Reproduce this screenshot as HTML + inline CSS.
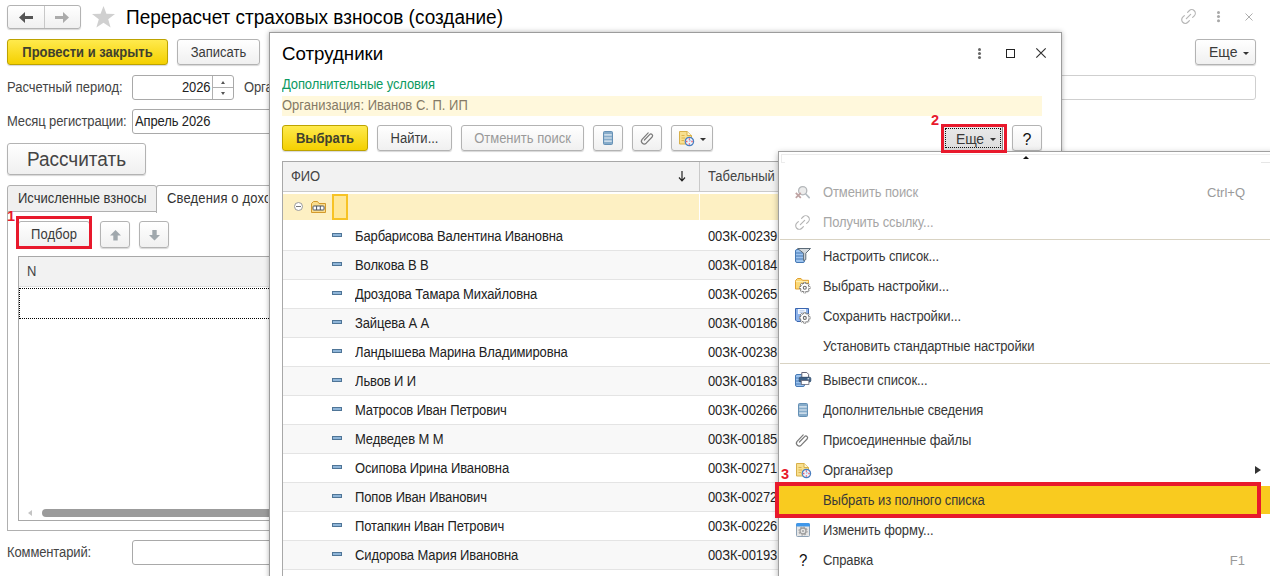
<!DOCTYPE html>
<html lang="ru">
<head>
<meta charset="utf-8">
<title>Перерасчет страховых взносов (создание)</title>
<style>
*{box-sizing:border-box;margin:0;padding:0}
html,body{width:1270px;height:576px;overflow:hidden;background:#fff}
body{font-family:"Liberation Sans",sans-serif;font-size:13px;color:#333;position:relative}
.abs{position:absolute}
.t{position:absolute;white-space:nowrap;line-height:16px;height:16px;letter-spacing:-0.12px;transform:scaleY(1.07);transform-origin:0 12.5px}
.btn{position:absolute;border:1px solid #b3b3b3;border-radius:3px;background:linear-gradient(#ffffff,#f0f0f0);box-shadow:0 1px 1px rgba(0,0,0,.16);text-align:center;white-space:nowrap;color:#3a3a3a;line-height:25px;height:26px}
.btn>span{display:inline-block;transform:scaleY(1.07);transform-origin:0 66%}
.btn.y{background:linear-gradient(#ffea4d,#f4d000);border-color:#bda300;font-weight:bold;color:#40402e}
.btn.dis{color:#9a9a9a}
.inp{position:absolute;border:1px solid #a9a9a9;border-radius:3px;background:#fff;height:25px}
.red{position:absolute;border:3px solid #e8192c;z-index:5}
.rn{position:absolute;color:#e8192c;font-weight:bold;font-size:14.5px;line-height:14px;height:14px;z-index:5}
.caret{position:absolute;width:0;height:0;border-left:4px solid transparent;border-right:4px solid transparent;border-top:4px solid #333}
#modal{position:absolute;left:269px;top:32px;width:793px;height:560px;background:#fff;border:1px solid #9c9c9c;box-shadow:0 0 5px rgba(0,0,0,.3)}
.row{position:absolute;left:283px;width:495px;height:29px;border-bottom:1px solid #e4e4e4}
.row.g{background:#f8f8f8}
.dash{position:absolute;left:332px;width:10px;height:4px;background:#8fb5d8;border:1px solid #4f7597}
#pop{position:absolute;left:778px;top:151px;width:500px;height:440px;background:#fff;border:1px solid #a0a0a0;box-shadow:0 2px 6px rgba(0,0,0,.3)}
.mi{position:absolute;left:823px;white-space:nowrap;line-height:16px;height:16px;color:#383838;letter-spacing:-0.12px;transform:scaleY(1.07);transform-origin:0 12.5px}
.mi.dis{color:#a6a6a6}
.sep{position:absolute;left:780px;width:490px;height:1px;background:#d9d3c3}
.sc{position:absolute;color:#9a9a9a;line-height:16px;height:16px;white-space:nowrap;text-align:right}
svg{position:absolute;overflow:visible}
</style>
</head>
<body>

<!-- ============ main form header ============ -->
<div class="btn" style="left:7px;top:5px;width:74px;height:24px"></div>
<div class="abs" style="left:44px;top:6px;width:1px;height:22px;background:#c8c8c8"></div>
<svg style="left:19px;top:12px" width="14" height="11" viewBox="0 0 14 11"><path d="M0 5.5 L6 0 V3.9 H14 V7.1 H6 V11 Z" fill="#555"/></svg>
<svg style="left:55px;top:12px" width="14" height="11" viewBox="0 0 14 11"><path d="M14 5.5 L8 0 V3.9 H0 V7.1 H8 V11 Z" fill="#ababab"/></svg>
<svg style="left:91.8px;top:6.3px" width="23" height="21.6" viewBox="0 0 22 21" preserveAspectRatio="none"><path d="M11 0 L13.8 7.6 L22 7.9 L15.5 12.9 L17.8 21 L11 16.3 L4.2 21 L6.5 12.9 L0 7.9 L8.2 7.6 Z" fill="#d0d0d0"/></svg>
<div class="t" style="left:126px;top:6px;font-size:19px;letter-spacing:0;transform:scaleY(1.02);line-height:24px;height:24px;color:#000">Перерасчет страховых взносов (создание)</div>

<!-- top right icons -->
<svg style="left:1181px;top:8.7px" width="15" height="15" viewBox="0 0 15 15"><g transform="translate(7.5 7.5) rotate(-45) scale(0.76) translate(-12 -12)" fill="none" stroke="#b6b6b6" stroke-width="1.55" stroke-linecap="round"><path d="M15 7.3h3a4.7 4.7 0 0 1 4.7 4.7 4.7 4.7 0 0 1-4.7 4.7h-3m-6 0H6a4.7 4.7 0 0 1-4.7-4.7 4.7 4.7 0 0 1 4.7-4.7h3"/><path d="M8 12H16"/></g></svg>
<div class="abs" style="left:1216.7px;top:10.5px;width:3.4px;height:3.4px;border-radius:50%;background:#a8a8a8;box-shadow:0 4.1px 0 #a8a8a8,0 8.2px 0 #a8a8a8"></div>
<svg style="left:1245px;top:13px" width="8" height="8" viewBox="0 0 8 8"><path d="M0.5 0.5 L7.5 7.5 M7.5 0.5 L0.5 7.5" stroke="#adadad" stroke-width="1" fill="none"/></svg>

<!-- command bar -->
<div class="btn y" style="left:7px;top:39px;width:161px"><span>Провести и закрыть</span></div>
<div class="btn" style="left:177px;top:39px;width:83px"><span>Записать</span></div>
<div class="btn" style="left:1195px;top:39px;width:61px;text-align:left;padding-left:13px;font-size:14px"><span>Еще</span></div>
<div class="caret" style="left:1243px;top:52px;border-left-width:3px;border-right-width:3px;border-top-width:3px"></div>

<!-- fields -->
<div class="t" style="left:7px;top:80px;letter-spacing:0;color:#444">Расчетный период:</div>
<div class="inp" style="left:132px;top:75px;width:102px"></div>
<div class="t" style="left:182px;top:80px;color:#222">2026</div>
<div class="abs" style="left:212px;top:76px;width:1px;height:23px;background:#b0b0b0"></div>
<div class="abs" style="left:213px;top:87px;width:20px;height:1px;background:#b0b0b0"></div>
<div class="abs" style="left:221px;top:81px;width:0;height:0;border-left:2px solid transparent;border-right:2px solid transparent;border-bottom:3px solid #555"></div>
<div class="abs" style="left:221px;top:92px;width:0;height:0;border-left:2px solid transparent;border-right:2px solid transparent;border-top:3px solid #555"></div>
<div class="t" style="left:244px;top:80px;color:#444">Организация:</div>
<div class="inp" style="left:330px;top:75px;width:926px;border-color:#cfcfcf"></div>

<div class="t" style="left:7px;top:114px;color:#444">Месяц регистрации:</div>
<div class="inp" style="left:132px;top:109px;width:200px"></div>
<div class="t" style="left:135px;top:114px;color:#222">Апрель 2026</div>

<div class="btn" style="left:7px;top:143px;width:139px;height:32px;line-height:32px;font-size:19px;color:#444"><span style="transform:scaleY(1.02)">Рассчитать</span></div>

<!-- tabs -->
<div class="abs" style="left:7px;top:211px;width:800px;height:320px;border:1px solid #b0b0b0;background:#fff"></div>
<div class="abs" style="left:7px;top:185px;width:150px;height:27px;border:1px solid #b0b0b0;border-radius:3px 3px 0 0;background:#f0f0f0"></div>
<div class="t" style="left:18px;top:191px;letter-spacing:0;color:#333">Исчисленные взносы</div>
<div class="abs" style="left:156px;top:185px;width:200px;height:28px;border:1px solid #b0b0b0;border-bottom:none;border-radius:3px 3px 0 0;background:#fff"></div>
<div class="t" style="left:167px;top:191px;width:101px;overflow:hidden;letter-spacing:0.15px;color:#333">Сведения о доходах</div>

<!-- podbor -->
<div class="rn" style="left:7px;top:209px">1</div>
<div class="btn" style="left:18px;top:221px;width:72px;height:27px;line-height:26px"><span>Подбор</span></div>
<div class="red" style="left:16px;top:216px;width:76px;height:33px"></div>
<div class="btn" style="left:100px;top:221px;width:30px;height:27px"></div>
<div class="btn" style="left:139px;top:221px;width:30px;height:27px"></div>
<svg style="left:109.6px;top:229.6px" width="11" height="10.6" viewBox="0 0 10 10" preserveAspectRatio="none"><path d="M5 0 L10 5.3 H7 V10 H3 V5.3 H0 Z" fill="#a0a8ad"/></svg>
<svg style="left:148.6px;top:229.6px" width="11" height="10.6" viewBox="0 0 10 10" preserveAspectRatio="none"><path d="M5 10 L10 4.7 H7 V0 H3 V4.7 H0 Z" fill="#a0a8ad"/></svg>

<!-- left table -->
<div class="abs" style="left:18px;top:256px;width:780px;height:265px;border:1px solid #a8a8a8;background:#fff"></div>
<div class="abs" style="left:19px;top:257px;width:778px;height:30px;background:#f2f2f2;border-bottom:1px solid #e0e0e0"></div>
<div class="t" style="left:27px;top:264px;color:#444">N</div>
<div class="abs" style="left:19px;top:288px;width:778px;height:31px;border:1px dotted #000"></div>
<div class="abs" style="left:42px;top:509px;width:700px;height:8px;border-radius:4px;background:#9b9b9b"></div>
<div class="abs" style="left:28px;top:510px;width:0;height:0;border-top:3px solid transparent;border-bottom:3px solid transparent;border-right:4px solid #c4c4c4"></div>

<div class="t" style="left:7px;top:545px;color:#444">Комментарий:</div>
<div class="inp" style="left:132px;top:540px;width:1124px"></div>

<!-- ============ modal ============ -->
<div id="modal"></div>
<div class="t" style="left:282px;top:42px;font-size:18.7px;letter-spacing:0;transform:scaleY(1.02);line-height:24px;height:24px;color:#000">Сотрудники</div>
<div class="abs" style="left:978px;top:48px;width:3px;height:3px;border-radius:50%;background:#666;box-shadow:0 4px 0 #666,0 8px 0 #666"></div>
<div class="abs" style="left:1006px;top:49px;width:9px;height:9px;border:1.4px solid #222"></div>
<svg style="left:1036px;top:48px" width="10" height="10" viewBox="0 0 10 10"><path d="M0.3 0.3 L9.7 9.7 M9.7 0.3 L0.3 9.7" stroke="#333" stroke-width="1.2" fill="none"/></svg>

<div class="t" style="left:282px;top:77px;color:#0c9a62">Дополнительные условия</div>
<div class="abs" style="left:282px;top:96px;width:760px;height:20px;background:#fff8dc"></div>
<div class="t" style="left:282px;top:98px;letter-spacing:0;color:#857a66">Организация: Иванов С. П. ИП</div>

<div class="btn y" style="left:282px;top:125px;width:86px"><span>Выбрать</span></div>
<div class="btn" style="left:377px;top:125px;width:75px"><span>Найти...</span></div>
<div class="btn dis" style="left:461px;top:125px;width:123px"><span>Отменить поиск</span></div>
<div class="btn" style="left:593px;top:125px;width:30px"></div>
<div class="btn" style="left:632px;top:125px;width:30px"></div>
<div class="btn" style="left:671px;top:125px;width:42px"></div>
<svg style="left:603px;top:131px" width="10" height="14" viewBox="0 0 10 14"><rect x="0.5" y="0.5" width="9" height="13" rx="1" fill="#86abc9" stroke="#6590b5"/><path d="M1.2 3.9 H8.8 M1.2 7 H8.8 M1.2 10.1 H8.8" stroke="#e3edf5" stroke-width="1.1"/></svg>
<svg style="left:641px;top:131px" width="13" height="14" viewBox="0 0 13 14"><path d="M3.4 9 L8.6 3.6 a1.7 1.7 0 0 1 2.5 2.4 L5.2 12.2 a2.8 2.8 0 0 1 -4.1 -3.8 L7.2 1.9" fill="none" stroke="#7a7a7a" stroke-width="1.2" stroke-linecap="round"/></svg>
<svg style="left:679px;top:131px" width="15" height="15" viewBox="0 0 15 15"><path d="M0.5 0.5 H8 L12.5 4.5 V13 H0.5 Z" fill="#f8df8e" stroke="#d8b04a"/><path d="M8 0.5 V4.5 H12.5" fill="#fff6d0" stroke="#d8b04a"/><path d="M2.5 4.5 H5.5 M2.5 7 H6 M2.5 9.5 H5" stroke="#d8b04a" stroke-width="0.9"/><circle cx="10.4" cy="10.5" r="4.2" fill="#eef4fc" stroke="#4a7fc0" stroke-width="1.2"/><path d="M10.4 10.5 V8.3 M10.4 10.5 L12 9.4" stroke="#9dbde6" stroke-width="0.9" fill="none"/><path d="M10.4 7.4 V8.4 M10.4 12.6 V13.6 M7.3 10.5 H8.3 M12.5 10.5 H13.5" stroke="#e8192c" stroke-width="1.3"/></svg>
<div class="caret" style="left:700px;top:138px;border-left-width:3px;border-right-width:3px;border-top-width:3px"></div>

<div class="rn" style="left:931px;top:113px">2</div>
<div class="abs" style="left:944px;top:127px;width:59px;height:23px;background:linear-gradient(#e9e9e9,#dcdcdc);border-right:1px solid #8f8f8f"></div>
<div class="abs" style="left:945px;top:128px;width:56px;height:20px;border:1px dotted #111"></div>
<div class="t" style="left:956px;top:131px;font-size:14px;letter-spacing:-0.2px;color:#3a3a3a">Еще</div>
<div class="caret" style="left:990px;top:138px;border-left-width:3px;border-right-width:3px;border-top-width:3px"></div>
<div class="red" style="left:941px;top:124px;width:66px;height:29px"></div>
<div class="btn" style="left:1012px;top:125px;width:30px;font-size:16px;line-height:27px;color:#111"><span>?</span></div>

<!-- modal table -->
<div class="abs" style="left:282px;top:161px;width:760px;height:430px;border:1px solid #a8a8a8;background:#fff"></div>
<div class="abs" style="left:283px;top:162px;width:758px;height:30px;background:#f2f2f2;border-bottom:1px solid #cacaca"></div>
<div class="abs" style="left:699px;top:162px;width:1px;height:30px;background:#c9c9c9"></div>
<div class="t" style="left:291px;top:169px;color:#444">ФИО</div>
<div class="t" style="left:708px;top:169px;letter-spacing:0;color:#444">Табельный номер</div>
<svg style="left:678px;top:171px" width="8" height="11" viewBox="0 0 8 11"><path d="M4 0 V9.5 M1 6.5 L4 9.8 L7 6.5" fill="none" stroke="#222" stroke-width="1.2"/></svg>

<div class="abs" style="left:283px;top:194px;width:758px;height:26px;background:#fdf0c3"></div>
<div class="abs" style="left:699px;top:193px;width:1px;height:29px;background:#fff"></div>
<div class="abs" style="left:294px;top:202px;width:9px;height:9px;border:1px solid #9a9a9a;border-radius:50%;background:#fff"></div>
<div class="abs" style="left:296px;top:206px;width:5px;height:1px;background:#777"></div>
<svg style="left:311px;top:201px" width="15" height="12" viewBox="0 0 15 12"><path d="M0.5 11.5 V2.5 L2.5 0.5 H6.5 L8 2.5 H14.5 V11.5 Z" fill="#f9dc8c" stroke="#d39a2c"/><rect x="2" y="5" width="11" height="4" rx="0.8" fill="#fff" stroke="#4d5560" stroke-width="1"/><path d="M5.6 5 V9 M9.3 5 V9" stroke="#4d5560" stroke-width="1"/></svg>
<div class="abs" style="left:332px;top:194px;width:16px;height:26px;background:#ffe89a;border:2px solid #f7c325"></div>
<!-- rows -->
<div class="row" style="top:222px"></div>
<div class="dash" style="top:233px"></div>
<div class="t" style="left:355px;top:229px;color:#222">Барбарисова Валентина Ивановна</div>
<div class="t" style="left:708px;top:229px;color:#222">00ЗК-00239</div>
<div class="row g" style="top:251px"></div>
<div class="dash" style="top:262px"></div>
<div class="t" style="left:355px;top:258px;color:#222">Волкова В В</div>
<div class="t" style="left:708px;top:258px;color:#222">00ЗК-00184</div>
<div class="row" style="top:280px"></div>
<div class="dash" style="top:291px"></div>
<div class="t" style="left:355px;top:287px;color:#222">Дроздова Тамара Михайловна</div>
<div class="t" style="left:708px;top:287px;color:#222">00ЗК-00265</div>
<div class="row g" style="top:309px"></div>
<div class="dash" style="top:320px"></div>
<div class="t" style="left:355px;top:316px;color:#222">Зайцева А А</div>
<div class="t" style="left:708px;top:316px;color:#222">00ЗК-00186</div>
<div class="row" style="top:338px"></div>
<div class="dash" style="top:349px"></div>
<div class="t" style="left:355px;top:345px;color:#222">Ландышева Марина Владимировна</div>
<div class="t" style="left:708px;top:345px;color:#222">00ЗК-00238</div>
<div class="row g" style="top:367px"></div>
<div class="dash" style="top:378px"></div>
<div class="t" style="left:355px;top:374px;color:#222">Львов И И</div>
<div class="t" style="left:708px;top:374px;color:#222">00ЗК-00183</div>
<div class="row" style="top:396px"></div>
<div class="dash" style="top:407px"></div>
<div class="t" style="left:355px;top:403px;color:#222">Матросов Иван Петрович</div>
<div class="t" style="left:708px;top:403px;color:#222">00ЗК-00266</div>
<div class="row g" style="top:425px"></div>
<div class="dash" style="top:436px"></div>
<div class="t" style="left:355px;top:432px;color:#222">Медведев М М</div>
<div class="t" style="left:708px;top:432px;color:#222">00ЗК-00185</div>
<div class="row" style="top:454px"></div>
<div class="dash" style="top:465px"></div>
<div class="t" style="left:355px;top:461px;color:#222">Осипова Ирина Ивановна</div>
<div class="t" style="left:708px;top:461px;color:#222">00ЗК-00271</div>
<div class="row g" style="top:483px"></div>
<div class="dash" style="top:494px"></div>
<div class="t" style="left:355px;top:490px;color:#222">Попов Иван Иванович</div>
<div class="t" style="left:708px;top:490px;color:#222">00ЗК-00272</div>
<div class="row" style="top:512px"></div>
<div class="dash" style="top:523px"></div>
<div class="t" style="left:355px;top:519px;color:#222">Потапкин Иван Петрович</div>
<div class="t" style="left:708px;top:519px;color:#222">00ЗК-00226</div>
<div class="row g" style="top:541px"></div>
<div class="dash" style="top:552px"></div>
<div class="t" style="left:355px;top:548px;color:#222">Сидорова Мария Ивановна</div>
<div class="t" style="left:708px;top:548px;color:#222">00ЗК-00193</div>
<div class="row" style="top:570px"></div>

<!-- ============ popup menu ============ -->
<div id="pop"></div>
<div class="abs" style="left:781px;top:154px;width:489px;height:9px;border-left:1px solid #ececec;border-top:1px solid #ececec"></div>
<div class="abs" style="left:781px;top:162px;width:4px;height:1px;background:#ececec"></div>
<div class="abs" style="left:1261px;top:162px;width:9px;height:1px;background:#e6e6e6"></div>
<div class="abs" style="left:1023px;top:156px;width:0;height:0;border-left:3px solid transparent;border-right:3px solid transparent;border-bottom:3px solid #111"></div>

<div class="abs" style="left:779px;top:486px;width:491px;height:28px;background:#f9cb1f"></div>
<div class="mi dis" style="top:185px">Отменить поиск</div>
<div class="mi dis" style="top:215px">Получить ссылку...</div>
<div class="mi" style="top:249px">Настроить список...</div>
<div class="mi" style="top:279px">Выбрать настройки...</div>
<div class="mi" style="top:309px">Сохранить настройки...</div>
<div class="mi" style="top:339px">Установить стандартные настройки</div>
<div class="mi" style="top:373px">Вывести список...</div>
<div class="mi" style="top:403px">Дополнительные сведения</div>
<div class="mi" style="top:433px">Присоединенные файлы</div>
<div class="mi" style="top:463px">Органайзер</div>
<div class="mi" style="top:493px">Выбрать из полного списка</div>
<div class="mi" style="top:523px">Изменить форму...</div>
<div class="mi" style="top:553px">Справка</div>
<div class="sep" style="top:239px"></div>
<div class="sep" style="top:363px"></div>
<div class="sc" style="left:1180px;width:65px;top:185px">Ctrl+Q</div>
<div class="sc" style="left:1180px;width:65px;top:553px">F1</div>
<div class="abs" style="left:1255px;top:466px;width:0;height:0;border-top:4.5px solid transparent;border-bottom:4.5px solid transparent;border-left:6px solid #333"></div>
<div class="red" style="left:775px;top:482px;width:486px;height:36px;border-width:4px"></div>
<div class="rn" style="left:781px;top:467px">3</div>
<svg style="left:795px;top:186px" width="15" height="13" viewBox="0 0 15 13"><circle cx="7.7" cy="4.7" r="4.1" fill="#ececec" stroke="#b4b7ba" stroke-width="1.3"/><path d="M10.6 7.8 L14.2 11.6" stroke="#b4bcc2" stroke-width="1.6" stroke-linecap="round"/><path d="M0.8 6.8 L5.8 11.8 M5.8 6.8 L0.8 11.8" stroke="#bfa3a3" stroke-width="1.7"/></svg>
<svg style="left:795px;top:214.8px" width="15" height="15" viewBox="0 0 15 15"><g transform="translate(7.5 7.5) rotate(-45) scale(0.76) translate(-12 -12)" fill="none" stroke="#b4b4b4" stroke-width="1.5" stroke-linecap="round"><path d="M15 7.3h3a4.7 4.7 0 0 1 4.7 4.7 4.7 4.7 0 0 1-4.7 4.7h-3m-6 0H6a4.7 4.7 0 0 1-4.7-4.7 4.7 4.7 0 0 1 4.7-4.7h3"/><path d="M8 12H16"/></g></svg>
<svg style="left:795px;top:248px" width="16" height="15" viewBox="0 0 16 15"><rect x="0.5" y="1.5" width="9" height="13" rx="1.5" fill="#9cc3ee" stroke="#4679b4"/><path d="M1 5 H9 M1 8 H9 M1 11 H9" stroke="#4679b4" stroke-width="1"/><path d="M2.6 0.5 H15.5 L10.8 5.2 V11.6 L8.6 12.6 V5.2 Z" fill="#d5dade" stroke="#5c6b78" stroke-width="1" stroke-linejoin="round"/></svg>
<svg style="left:795px;top:278px" width="16" height="16" viewBox="0 0 16 16"><path d="M0.5 11 V2.5 L2.5 0.5 H6 L7.5 2.3 H13.5 V11 Z" fill="#fbd978" stroke="#e0a030"/><path d="M0.8 3.6 H13.2" stroke="#fff0b8" stroke-width="1"/><g transform="translate(9.8 9.7)"><g fill="#fff" stroke="#6b6b6b" stroke-width="1"><circle r="4.3"/></g><g stroke="#6b6b6b" stroke-width="2.6" stroke-linecap="butt"><path d="M0 -5.6 V-3.8 M0 5.6 V3.8 M-5.6 0 H-3.8 M5.6 0 H3.8 M-3.96 -3.96 L-2.7 -2.7 M3.96 3.96 L2.7 2.7 M-3.96 3.96 L-2.7 2.7 M3.96 -3.96 L2.7 -2.7"/></g><g stroke="#fff" stroke-width="1.2"><path d="M0 -5.2 V-3.6 M0 5.2 V3.6 M-5.2 0 H-3.6 M5.2 0 H3.6 M-3.68 -3.68 L-2.55 -2.55 M3.68 3.68 L2.55 2.55 M-3.68 3.68 L-2.55 2.55 M3.68 -3.68 L2.55 -2.55"/></g><circle r="3.6" fill="#fff"/><circle r="1.5" fill="none" stroke="#6b6b6b" stroke-width="1.1"/></g></svg>
<svg style="left:795px;top:308px" width="16" height="16" viewBox="0 0 16 16"><path d="M0.5 0.5 H13.5 V13.5 H2 L0.5 12 Z" fill="#8fb4ea" stroke="#3a66b0"/><rect x="3" y="1" width="8" height="5" fill="#f4f8ff"/><path d="M4.5 2.8 H9.5 M4.5 4.4 H8" stroke="#a9c0e4" stroke-width="0.8"/><g transform="translate(9.8 9.9)"><g fill="#fff" stroke="#6b6b6b" stroke-width="1"><circle r="4.3"/></g><g stroke="#6b6b6b" stroke-width="2.6" stroke-linecap="butt"><path d="M0 -5.6 V-3.8 M0 5.6 V3.8 M-5.6 0 H-3.8 M5.6 0 H3.8 M-3.96 -3.96 L-2.7 -2.7 M3.96 3.96 L2.7 2.7 M-3.96 3.96 L-2.7 2.7 M3.96 -3.96 L2.7 -2.7"/></g><g stroke="#fff" stroke-width="1.2"><path d="M0 -5.2 V-3.6 M0 5.2 V3.6 M-5.2 0 H-3.6 M5.2 0 H3.6 M-3.68 -3.68 L-2.55 -2.55 M3.68 3.68 L2.55 2.55 M-3.68 3.68 L-2.55 2.55 M3.68 -3.68 L2.55 -2.55"/></g><circle r="3.6" fill="#fff"/><circle r="1.5" fill="none" stroke="#6b6b6b" stroke-width="1.1"/></g></svg>
<svg style="left:795px;top:372px" width="16" height="16" viewBox="0 0 16 16"><rect x="0.5" y="2.5" width="9" height="12" rx="1.5" fill="#9cc3ee" stroke="#4679b4"/><path d="M1 6 H9 M1 9 H9 M1 12 H9" stroke="#4679b4" stroke-width="1"/><path d="M6.8 5.5 V0.5 H11.8 L13.6 2.3 V5.5 Z" fill="#fff" stroke="#667"/><rect x="4.2" y="5.3" width="11.6" height="4.6" rx="1.2" fill="#3f6186" stroke="#2f4d6e" stroke-width="0.8"/><rect x="6.3" y="8.6" width="7.6" height="3.8" fill="#fff" stroke="#667" stroke-width="0.8"/><path d="M12.6 6.8 H14.2" stroke="#fff" stroke-width="1"/></svg>
<svg style="left:798px;top:403px" width="10" height="14" viewBox="0 0 10 14"><rect x="0.5" y="0.5" width="9" height="13" rx="1" fill="#86abc9" stroke="#6590b5"/><path d="M1.2 3.9 H8.8 M1.2 7 H8.8 M1.2 10.1 H8.8" stroke="#e3edf5" stroke-width="1.1"/></svg>
<svg style="left:796px;top:433px" width="13" height="14" viewBox="0 0 13 14"><path d="M3.4 9 L8.6 3.6 a1.7 1.7 0 0 1 2.5 2.4 L5.2 12.2 a2.8 2.8 0 0 1 -4.1 -3.8 L7.2 1.9" fill="none" stroke="#7a7a7a" stroke-width="1.2" stroke-linecap="round"/></svg>
<svg style="left:796px;top:463px" width="15" height="15" viewBox="0 0 15 15"><path d="M0.5 0.5 H8 L12.5 4.5 V13 H0.5 Z" fill="#f8df8e" stroke="#d8b04a"/><path d="M8 0.5 V4.5 H12.5" fill="#fff6d0" stroke="#d8b04a"/><path d="M2.5 4.5 H5.5 M2.5 7 H6 M2.5 9.5 H5" stroke="#d8b04a" stroke-width="0.9"/><circle cx="10.4" cy="10.5" r="4.2" fill="#eef4fc" stroke="#4a7fc0" stroke-width="1.2"/><path d="M10.4 10.5 V8.3 M10.4 10.5 L12 9.4" stroke="#9dbde6" stroke-width="0.9" fill="none"/><path d="M10.4 7.4 V8.4 M10.4 12.6 V13.6 M7.3 10.5 H8.3 M12.5 10.5 H13.5" stroke="#e8192c" stroke-width="1.3"/></svg>
<svg style="left:796px;top:523px" width="14" height="14" viewBox="0 0 14 14"><rect x="0.5" y="0.5" width="13" height="13" rx="1" fill="#e6e6e6" stroke="#8ea2b6"/><path d="M0.5 3 V1.5 a1 1 0 0 1 1 -1 H12.5 a1 1 0 0 1 1 1 V3 Z" fill="#3f97ea" stroke="#3f97ea"/><circle cx="7" cy="8" r="4.1" fill="none" stroke="#a6a6a6" stroke-width="1.1" stroke-dasharray="1.7 1.5"/><circle cx="7" cy="8" r="3" fill="none" stroke="#9c9c9c" stroke-width="1.3"/><circle cx="7" cy="8" r="1.1" fill="#a6a6a6"/></svg>
<div class="t" style="left:799px;top:552px;font-size:15px;line-height:18px;height:18px;letter-spacing:0;color:#111">?</div>
</body>
</html>
